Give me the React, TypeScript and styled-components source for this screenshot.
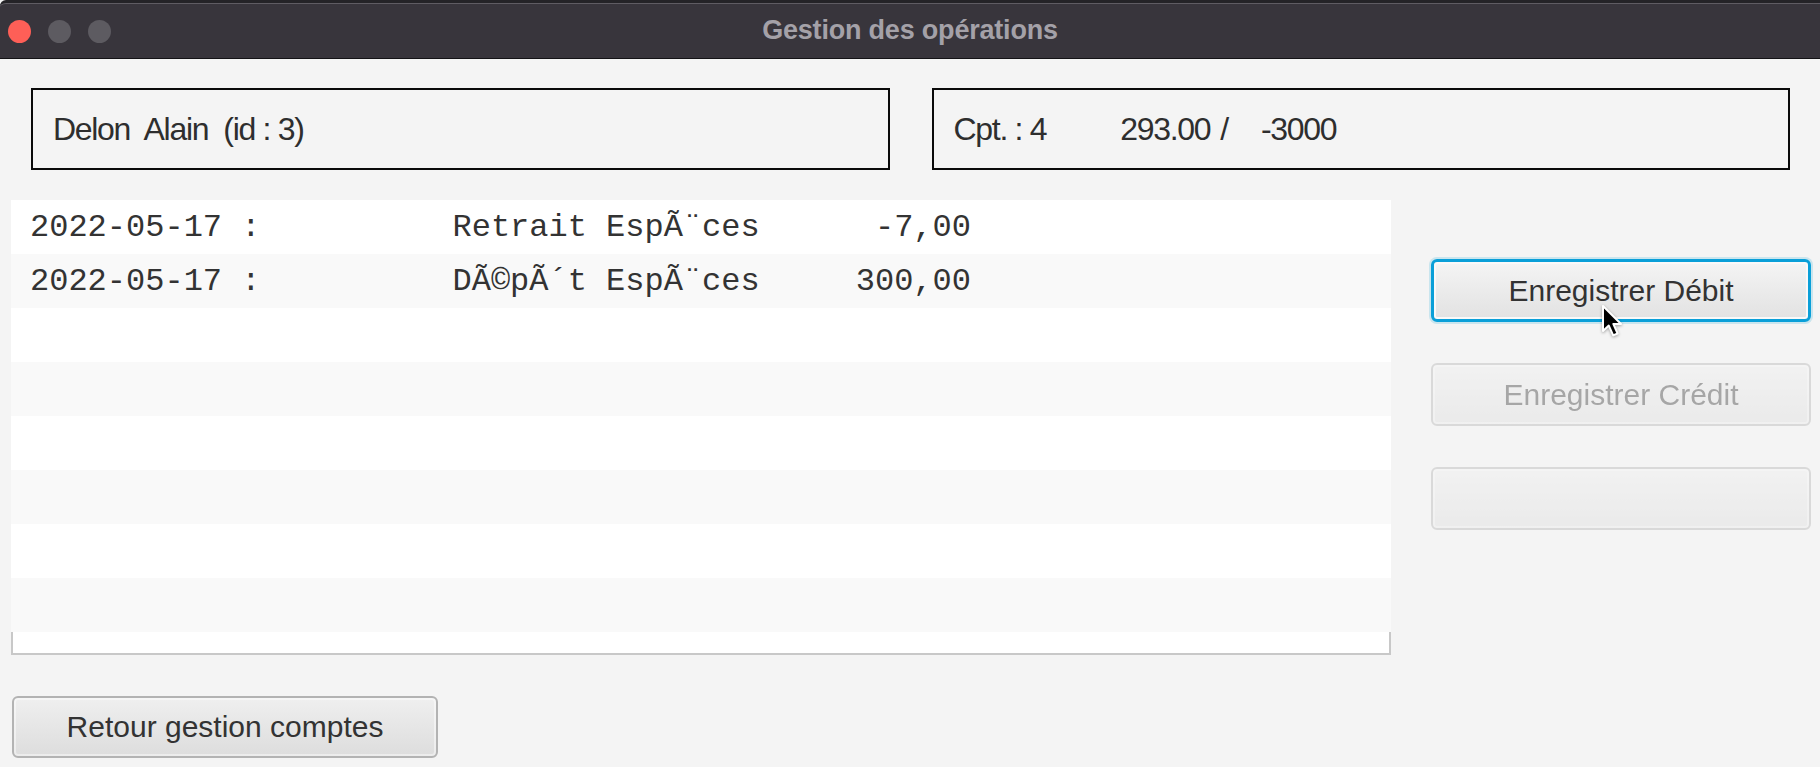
import React from 'react';
import styled, { createGlobalStyle, css } from 'styled-components';

const GlobalStyle = createGlobalStyle`
  html, body {
    margin: 0;
    padding: 0;
    background: #f4f4f4;
  }
  body {
    font-family: "Liberation Sans", Arial, sans-serif;
    color: #333333;
  }
`;

interface Operation {
  date: string;
  label: string;
  amount: string;
}

const operations: Operation[] = [
  { date: '2022-05-17', label: 'Retrait EspÃ¨ces', amount: '-7,00' },
  { date: '2022-05-17', label: 'DÃ©pÃ´t EspÃ¨ces', amount: '300,00' },
];

const ROW_COUNT = 8;

// fixed width columns, like the String.format of the original list cell
const formatOperation = (op: Operation) =>
  `${op.date} :` + ' '.repeat(10) + op.label.padEnd(16, ' ') + op.amount.padStart(11, ' ');

export default function App() {
  const rows = Array.from({ length: ROW_COUNT }, (_, i) => operations[i]);

  return (
    <>
      <GlobalStyle />
      <Window>
        <TitleBar>
          <TrafficLights>
            <Light color="#fe5f57" />
            <Light color="#5d5b61" />
            <Light color="#5d5b61" />
          </TrafficLights>
          <Title>Gestion des opérations</Title>
          <span />
        </TitleBar>

        <Content>
          <InfoRow>
            <InfoBox>
              <InfoText>{'Delon  Alain  (id : 3)'}</InfoText>
            </InfoBox>
            <InfoBox>
              <InfoText>Cpt. : 4</InfoText>
              <InfoText offset={74}>293.00</InfoText>
              <InfoText offset={10}>/</InfoText>
              <InfoText offset={33}>-3000</InfoText>
            </InfoBox>
          </InfoRow>

          <MainRow>
            <ListView>
              {rows.map((op, i) => (
                <ListRow key={i} alt={i % 2 === 1}>
                  {op ? formatOperation(op) : ''}
                </ListRow>
              ))}
              <ListFiller />
            </ListView>

            <ActionColumn>
              <CursorAnchor>
                <FxButton focused>Enregistrer Débit</FxButton>
                <Cursor width="24" height="34" viewBox="0 0 24 34">
                  <path
                    d="M2 2 L2 27 L7.8 21.6 L12.2 31.4 L16.6 29.5 L12.4 20 L20 20 Z"
                    fill="#000"
                    stroke="#fff"
                    strokeWidth="2"
                    strokeLinejoin="round"
                  />
                </Cursor>
              </CursorAnchor>
              <FxButton disabled>Enregistrer Crédit</FxButton>
              <FxButton disabled />
            </ActionColumn>
          </MainRow>

          <BottomRow>
            <FxButton wide>Retour gestion comptes</FxButton>
          </BottomRow>
        </Content>
      </Window>
    </>
  );
}

const Window = styled.div`
  width: 1820px;
  height: 767px;
  display: flex;
  flex-direction: column;
  background: #f4f4f4;
  overflow: hidden;
`;

const TitleBar = styled.div`
  flex: none;
  height: 55px;
  display: grid;
  grid-template-columns: 1fr auto 1fr;
  align-items: center;
  background: #38353c;
  border-top: 3px solid #242327;
  border-bottom: 1px solid #141316;
  box-shadow: inset 0 1px 0 #5f5c63;
  border-top-left-radius: 6px;
`;

const TrafficLights = styled.div`
  display: flex;
  gap: 17px;
  padding-left: 8px;
  padding-top: 1px;
`;

const Light = styled.span<{ color: string }>`
  width: 23px;
  height: 23px;
  border-radius: 50%;
  background: ${p => p.color};
`;

const Title = styled.div`
  font-family: "Liberation Sans", Arial, sans-serif;
  font-weight: bold;
  font-size: 27px;
  color: #a4a1a8;
  letter-spacing: -0.2px;
`;

const Content = styled.div`
  flex: 1;
  display: flex;
  flex-direction: column;
  padding: 29px 9px 0 11px;
`;

const InfoRow = styled.div`
  display: grid;
  grid-template-columns: 1fr 1fr;
  column-gap: 42px;
  margin: 0 21px 0 20px;
`;

const InfoBox = styled.div`
  box-sizing: border-box;
  height: 82px;
  border: 2px solid #0a0a0a;
  display: flex;
  align-items: center;
  padding-left: 20px;
  font-size: 32px;
  letter-spacing: -1.3px;
  color: #2e2e2e;
  white-space: pre;
`;

const InfoText = styled.span<{ offset?: number }>`
  margin-left: ${p => p.offset ?? 0}px;
`;

const MainRow = styled.div`
  display: grid;
  grid-template-columns: 1380px 1fr;
  column-gap: 40px;
  margin-top: 30px;
`;

const ListView = styled.div`
  display: flex;
  flex-direction: column;
`;

const ListRow = styled.div<{ alt: boolean }>`
  height: 54px;
  display: flex;
  align-items: center;
  padding-left: 19px;
  background: ${p => (p.alt ? '#f9f9f9' : '#ffffff')};
  font-family: "Liberation Mono", "Courier New", monospace;
  font-size: 32px;
  color: #333333;
  white-space: pre;
`;

const ListFiller = styled.div`
  height: 21px;
  background: #ffffff;
  border: 2px solid #c8c8c8;
  border-top: none;
`;

const ActionColumn = styled.div`
  display: flex;
  flex-direction: column;
  gap: 41px;
  padding-top: 59px;
`;

const CursorAnchor = styled.div`
  position: relative;
`;

const Cursor = styled.svg`
  position: absolute;
  left: 170px;
  top: 45px;
  filter: drop-shadow(0 1px 1.5px rgba(0, 0, 0, 0.35));
  pointer-events: none;
`;

const FxButton = styled.button<{ focused?: boolean; wide?: boolean }>`
  box-sizing: border-box;
  width: ${p => (p.wide ? '426px' : '100%')};
  height: ${p => (p.wide ? '62px' : '63px')};
  border: 2px solid #b3b3b3;
  border-radius: 6px;
  background: linear-gradient(to bottom, #efefef 0%, #dddddd 100%);
  box-shadow: inset 0 0 0 2px rgba(255, 255, 255, 0.45);
  font-family: "Liberation Sans", Arial, sans-serif;
  font-size: 30px;
  color: #333333;
  padding: 0;
  cursor: default;

  ${p =>
    p.focused &&
    css`
      border: 3px solid #0a9fd8;
      background: linear-gradient(to bottom, #f4f4f4 0%, #e2e2e2 100%);
      box-shadow: 0 0 0 2px rgba(3, 158, 211, 0.18), inset 0 0 0 2px #f9f9f9;
    `}

  &:disabled {
    opacity: 0.4;
  }
`;

const BottomRow = styled.div`
  display: flex;
  margin-top: 41px;
  padding-left: 1px;
`;
